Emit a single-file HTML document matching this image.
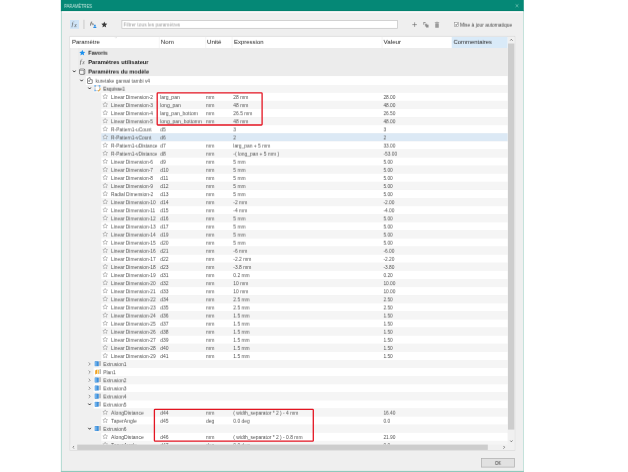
<!DOCTYPE html><html><head><meta charset="utf-8"><title>Paramètres</title><style>
html,body{margin:0;padding:0;background:#fff;}
body{width:628px;height:472px;overflow:hidden;position:relative;font-family:"Liberation Sans",sans-serif;}
svg.l{position:absolute;left:0;top:0;display:block;}
.c{position:absolute;left:0;top:0;width:628px;overflow:hidden;}
.t{position:absolute;left:0;top:0;display:block;height:10px;line-height:10px;white-space:nowrap;transform-origin:0 0;will-change:transform;font-family:"Liberation Sans",sans-serif;}
</style></head><body>
<svg class="l" width="628" height="472" viewBox="0 0 628 472">
<rect x="60.90" y="0.00" width="462.80" height="472.00" fill="#efefef"/>
<rect x="60.90" y="0.00" width="1.00" height="472.00" fill="#b2dad1"/>
<rect x="523.00" y="0.00" width="0.90" height="472.00" fill="#bfe0d8"/>
<rect x="60.90" y="470.90" width="463.00" height="1.10" fill="#8fc9bc"/>
<rect x="60.90" y="0.00" width="462.80" height="11.00" fill="#058876"/>
<rect x="60.90" y="10.60" width="462.80" height="0.60" fill="#027a68"/>
<rect x="61.90" y="11.30" width="461.10" height="1.60" fill="#fbf8f9"/>
<svg x="514.90" y="3.60" width="4.2" height="4.2" viewBox="0 0 10 10"><path d="M1.5 1.5 L8.5 8.5 M8.5 1.5 L1.5 8.5" stroke="#8fd0c3" stroke-width="1.5" fill="none"/></svg>
<rect x="70.00" y="20.00" width="9.00" height="8.80" fill="#cfe4f7"/>
<rect x="83.50" y="19.80" width="0.90" height="9.20" fill="#c6c6c6"/>
<svg x="93.00" y="24.30" width="3.8" height="3.8" viewBox="0 0 10 10"><circle cx="5" cy="2.6" r="2.4" fill="#2f8fe6"/><path d="M0.5 10 Q0.5 5.2 5 5.2 Q9.5 5.2 9.5 10 Z" fill="#2f8fe6"/></svg>
<svg x="101.10" y="21.30" width="6.4" height="6.4" viewBox="0 0 20 20"><polygon points="10,1 12.6,7.2 19.5,7.8 14.3,12.3 15.9,19 10,15.4 4.1,19 5.7,12.3 0.5,7.8 7.4,7.2" fill="#3a3a3a"/></svg>
<rect x="121.90" y="20.40" width="275.60" height="7.90" fill="#fff" stroke="#c2c2c2" stroke-width="0.7"/>
<svg x="411.90" y="21.90" width="5.4" height="5.4" viewBox="0 0 10 10"><path d="M5 0.8 L5 9.2 M0.8 5 L9.2 5" stroke="#666" stroke-width="1.1" fill="none"/></svg>
<svg x="422.60" y="21.40" width="6.6" height="6.6" viewBox="0 0 20 20"><path d="M2 2 L9 2 L9 5 L5 5 L5 10 L2 10 Z" fill="#9a9a9a"/><rect x="7" y="7" width="7" height="8.5" fill="#a2a2a2"/><rect x="10.5" y="10" width="7.5" height="8.5" fill="#8e8e8e"/></svg>
<svg x="434.20" y="21.40" width="5.6" height="6.8" viewBox="0 0 16 20"><rect x="5" y="0.8" width="6" height="2" fill="#9a9a9a"/><rect x="1.5" y="2.6" width="13" height="2.2" fill="#9a9a9a"/><rect x="2.8" y="5.6" width="10.4" height="13.2" rx="1" fill="#9a9a9a"/></svg>
<rect x="454.60" y="22.50" width="3.80" height="3.90" fill="#fbfbfb" stroke="#8a8a8a" stroke-width="0.5"/>
<svg x="454.90" y="22.90" width="3.2" height="3.2" viewBox="0 0 10 10"><path d="M1.5 5.2 L4 8 L8.8 1.8" stroke="#333" stroke-width="2.2" fill="none"/></svg>
<rect x="69.90" y="36.30" width="445.00" height="414.00" fill="#f0f0f0" stroke="#d9d9d9" stroke-width="0.7"/>
<rect x="70.00" y="36.90" width="437.60" height="11.10" fill="#ffffff"/>
<rect x="451.70" y="36.90" width="55.90" height="11.10" fill="#d9eaf8"/>
<rect x="158.90" y="36.90" width="0.50" height="11.10" fill="#ececec"/>
<rect x="205.60" y="36.90" width="0.50" height="11.10" fill="#ececec"/>
<rect x="231.80" y="36.90" width="0.50" height="11.10" fill="#ececec"/>
<rect x="381.80" y="36.90" width="0.50" height="11.10" fill="#ececec"/>
<svg x="114.50" y="37.00" width="2.6" height="1.5" viewBox="0 0 10 6"><path d="M0.5 0.5 L5 5 L9.5 0.5" fill="none" stroke="#b5b5b5" stroke-width="1.4"/></svg>
<rect x="78.00" y="48.00" width="429.60" height="28.10" fill="#ececec"/>
<svg x="79.05" y="49.35" width="6.5" height="6.5" viewBox="0 0 20 20"><polygon points="10,1 12.6,7.2 19.5,7.8 14.3,12.3 15.9,19 10,15.4 4.1,19 5.7,12.3 0.5,7.8 7.4,7.2" fill="#1a90ee"/></svg>
<path d="M73.30 70.90 L74.30 72.05 L75.30 70.90" fill="none" stroke="#2c2c2c" stroke-width="0.95" stroke-linecap="round" stroke-linejoin="round"/>
<svg x="78.85" y="68.20" width="6.8" height="6.8" viewBox="0 0 22 22"><rect x="2" y="2.5" width="17.5" height="17.5" rx="4" fill="#f6f6f6" stroke="#404040" stroke-width="2.0"/><path d="M2 7.5 L16 7.5 L19 3.5 M16 7.5 L16 20" fill="none" stroke="#4a4a4a" stroke-width="1.4"/></svg>
<rect x="85.80" y="76.10" width="421.80" height="9.00" fill="#ffffff"/>
<path d="M80.60 80.00 L81.60 81.15 L82.60 80.00" fill="none" stroke="#2c2c2c" stroke-width="0.95" stroke-linecap="round" stroke-linejoin="round"/>
<svg x="86.20" y="76.80" width="7.2" height="7.2" viewBox="0 0 22 22"><path d="M4 6 L4 19 Q4 20.5 5.5 20.5 L17 20.5 Q18.5 20.5 18.5 19 L18.5 9 L12 9 L12 3 Q12 1.8 10.5 2.4 Z" fill="#fff" stroke="#4a4a4a" stroke-width="1.9" stroke-linejoin="round"/><circle cx="9" cy="12.5" r="2.3" fill="#4a4a4a"/></svg>
<rect x="93.60" y="85.10" width="414.00" height="7.70" fill="#f5f5f5"/>
<path d="M88.60 87.85 L89.60 89.00 L90.60 87.85" fill="none" stroke="#2c2c2c" stroke-width="0.95" stroke-linecap="round" stroke-linejoin="round"/>
<svg x="94.10" y="84.95" width="6.8" height="6.8" viewBox="0 0 22 22"><rect x="3" y="3" width="15" height="15" fill="#fff" stroke="#666" stroke-width="1.6" stroke-dasharray="3 1.6"/><rect x="0.5" y="0.5" width="5" height="5" fill="#6ab4f5"/><rect x="15.5" y="0.5" width="5" height="5" fill="#6ab4f5"/><rect x="0.5" y="15.5" width="5" height="5" fill="#6ab4f5"/><path d="M12 20 L20 11 L22 13 L14 22 Z" fill="#f5a623"/></svg>
<rect x="101.30" y="92.80" width="406.30" height="8.09" fill="#ffffff"/>
<svg x="102.55" y="93.80" width="5.3" height="5.3" viewBox="0 0 20 20"><polygon points="10,1 12.6,7.2 19.5,7.8 14.3,12.3 15.9,19 10,15.4 4.1,19 5.7,12.3 0.5,7.8 7.4,7.2" fill="#fff" fill-opacity="0.5" stroke="#858585" stroke-width="1.7" stroke-linejoin="round"/></svg>
<rect x="101.30" y="100.89" width="406.30" height="8.09" fill="#f5f5f5"/>
<svg x="102.55" y="101.89" width="5.3" height="5.3" viewBox="0 0 20 20"><polygon points="10,1 12.6,7.2 19.5,7.8 14.3,12.3 15.9,19 10,15.4 4.1,19 5.7,12.3 0.5,7.8 7.4,7.2" fill="#fff" fill-opacity="0.5" stroke="#858585" stroke-width="1.7" stroke-linejoin="round"/></svg>
<rect x="101.30" y="108.99" width="406.30" height="8.09" fill="#ffffff"/>
<svg x="102.55" y="109.99" width="5.3" height="5.3" viewBox="0 0 20 20"><polygon points="10,1 12.6,7.2 19.5,7.8 14.3,12.3 15.9,19 10,15.4 4.1,19 5.7,12.3 0.5,7.8 7.4,7.2" fill="#fff" fill-opacity="0.5" stroke="#858585" stroke-width="1.7" stroke-linejoin="round"/></svg>
<rect x="101.30" y="117.08" width="406.30" height="8.09" fill="#f5f5f5"/>
<svg x="102.55" y="118.08" width="5.3" height="5.3" viewBox="0 0 20 20"><polygon points="10,1 12.6,7.2 19.5,7.8 14.3,12.3 15.9,19 10,15.4 4.1,19 5.7,12.3 0.5,7.8 7.4,7.2" fill="#fff" fill-opacity="0.5" stroke="#858585" stroke-width="1.7" stroke-linejoin="round"/></svg>
<rect x="101.30" y="125.18" width="406.30" height="8.10" fill="#ffffff"/>
<svg x="102.55" y="126.18" width="5.3" height="5.3" viewBox="0 0 20 20"><polygon points="10,1 12.6,7.2 19.5,7.8 14.3,12.3 15.9,19 10,15.4 4.1,19 5.7,12.3 0.5,7.8 7.4,7.2" fill="#fff" fill-opacity="0.5" stroke="#858585" stroke-width="1.7" stroke-linejoin="round"/></svg>
<rect x="101.30" y="133.28" width="406.30" height="8.09" fill="#dce9f5"/>
<svg x="102.55" y="134.27" width="5.3" height="5.3" viewBox="0 0 20 20"><polygon points="10,1 12.6,7.2 19.5,7.8 14.3,12.3 15.9,19 10,15.4 4.1,19 5.7,12.3 0.5,7.8 7.4,7.2" fill="#fff" fill-opacity="0.5" stroke="#858585" stroke-width="1.7" stroke-linejoin="round"/></svg>
<rect x="101.30" y="141.37" width="406.30" height="8.09" fill="#ffffff"/>
<svg x="102.55" y="142.37" width="5.3" height="5.3" viewBox="0 0 20 20"><polygon points="10,1 12.6,7.2 19.5,7.8 14.3,12.3 15.9,19 10,15.4 4.1,19 5.7,12.3 0.5,7.8 7.4,7.2" fill="#fff" fill-opacity="0.5" stroke="#858585" stroke-width="1.7" stroke-linejoin="round"/></svg>
<rect x="101.30" y="149.47" width="406.30" height="8.09" fill="#f5f5f5"/>
<svg x="102.55" y="150.46" width="5.3" height="5.3" viewBox="0 0 20 20"><polygon points="10,1 12.6,7.2 19.5,7.8 14.3,12.3 15.9,19 10,15.4 4.1,19 5.7,12.3 0.5,7.8 7.4,7.2" fill="#fff" fill-opacity="0.5" stroke="#858585" stroke-width="1.7" stroke-linejoin="round"/></svg>
<rect x="101.30" y="157.56" width="406.30" height="8.09" fill="#ffffff"/>
<svg x="102.55" y="158.56" width="5.3" height="5.3" viewBox="0 0 20 20"><polygon points="10,1 12.6,7.2 19.5,7.8 14.3,12.3 15.9,19 10,15.4 4.1,19 5.7,12.3 0.5,7.8 7.4,7.2" fill="#fff" fill-opacity="0.5" stroke="#858585" stroke-width="1.7" stroke-linejoin="round"/></svg>
<rect x="101.30" y="165.66" width="406.30" height="8.09" fill="#f5f5f5"/>
<svg x="102.55" y="166.65" width="5.3" height="5.3" viewBox="0 0 20 20"><polygon points="10,1 12.6,7.2 19.5,7.8 14.3,12.3 15.9,19 10,15.4 4.1,19 5.7,12.3 0.5,7.8 7.4,7.2" fill="#fff" fill-opacity="0.5" stroke="#858585" stroke-width="1.7" stroke-linejoin="round"/></svg>
<rect x="101.30" y="173.75" width="406.30" height="8.09" fill="#ffffff"/>
<svg x="102.55" y="174.75" width="5.3" height="5.3" viewBox="0 0 20 20"><polygon points="10,1 12.6,7.2 19.5,7.8 14.3,12.3 15.9,19 10,15.4 4.1,19 5.7,12.3 0.5,7.8 7.4,7.2" fill="#fff" fill-opacity="0.5" stroke="#858585" stroke-width="1.7" stroke-linejoin="round"/></svg>
<rect x="101.30" y="181.84" width="406.30" height="8.09" fill="#f5f5f5"/>
<svg x="102.55" y="182.84" width="5.3" height="5.3" viewBox="0 0 20 20"><polygon points="10,1 12.6,7.2 19.5,7.8 14.3,12.3 15.9,19 10,15.4 4.1,19 5.7,12.3 0.5,7.8 7.4,7.2" fill="#fff" fill-opacity="0.5" stroke="#858585" stroke-width="1.7" stroke-linejoin="round"/></svg>
<rect x="101.30" y="189.94" width="406.30" height="8.09" fill="#ffffff"/>
<svg x="102.55" y="190.94" width="5.3" height="5.3" viewBox="0 0 20 20"><polygon points="10,1 12.6,7.2 19.5,7.8 14.3,12.3 15.9,19 10,15.4 4.1,19 5.7,12.3 0.5,7.8 7.4,7.2" fill="#fff" fill-opacity="0.5" stroke="#858585" stroke-width="1.7" stroke-linejoin="round"/></svg>
<rect x="101.30" y="198.03" width="406.30" height="8.09" fill="#f5f5f5"/>
<svg x="102.55" y="199.03" width="5.3" height="5.3" viewBox="0 0 20 20"><polygon points="10,1 12.6,7.2 19.5,7.8 14.3,12.3 15.9,19 10,15.4 4.1,19 5.7,12.3 0.5,7.8 7.4,7.2" fill="#fff" fill-opacity="0.5" stroke="#858585" stroke-width="1.7" stroke-linejoin="round"/></svg>
<rect x="101.30" y="206.13" width="406.30" height="8.09" fill="#ffffff"/>
<svg x="102.55" y="207.13" width="5.3" height="5.3" viewBox="0 0 20 20"><polygon points="10,1 12.6,7.2 19.5,7.8 14.3,12.3 15.9,19 10,15.4 4.1,19 5.7,12.3 0.5,7.8 7.4,7.2" fill="#fff" fill-opacity="0.5" stroke="#858585" stroke-width="1.7" stroke-linejoin="round"/></svg>
<rect x="101.30" y="214.22" width="406.30" height="8.09" fill="#f5f5f5"/>
<svg x="102.55" y="215.22" width="5.3" height="5.3" viewBox="0 0 20 20"><polygon points="10,1 12.6,7.2 19.5,7.8 14.3,12.3 15.9,19 10,15.4 4.1,19 5.7,12.3 0.5,7.8 7.4,7.2" fill="#fff" fill-opacity="0.5" stroke="#858585" stroke-width="1.7" stroke-linejoin="round"/></svg>
<rect x="101.30" y="222.32" width="406.30" height="8.09" fill="#ffffff"/>
<svg x="102.55" y="223.32" width="5.3" height="5.3" viewBox="0 0 20 20"><polygon points="10,1 12.6,7.2 19.5,7.8 14.3,12.3 15.9,19 10,15.4 4.1,19 5.7,12.3 0.5,7.8 7.4,7.2" fill="#fff" fill-opacity="0.5" stroke="#858585" stroke-width="1.7" stroke-linejoin="round"/></svg>
<rect x="101.30" y="230.41" width="406.30" height="8.09" fill="#f5f5f5"/>
<svg x="102.55" y="231.41" width="5.3" height="5.3" viewBox="0 0 20 20"><polygon points="10,1 12.6,7.2 19.5,7.8 14.3,12.3 15.9,19 10,15.4 4.1,19 5.7,12.3 0.5,7.8 7.4,7.2" fill="#fff" fill-opacity="0.5" stroke="#858585" stroke-width="1.7" stroke-linejoin="round"/></svg>
<rect x="101.30" y="238.51" width="406.30" height="8.09" fill="#ffffff"/>
<svg x="102.55" y="239.51" width="5.3" height="5.3" viewBox="0 0 20 20"><polygon points="10,1 12.6,7.2 19.5,7.8 14.3,12.3 15.9,19 10,15.4 4.1,19 5.7,12.3 0.5,7.8 7.4,7.2" fill="#fff" fill-opacity="0.5" stroke="#858585" stroke-width="1.7" stroke-linejoin="round"/></svg>
<rect x="101.30" y="246.60" width="406.30" height="8.09" fill="#f5f5f5"/>
<svg x="102.55" y="247.60" width="5.3" height="5.3" viewBox="0 0 20 20"><polygon points="10,1 12.6,7.2 19.5,7.8 14.3,12.3 15.9,19 10,15.4 4.1,19 5.7,12.3 0.5,7.8 7.4,7.2" fill="#fff" fill-opacity="0.5" stroke="#858585" stroke-width="1.7" stroke-linejoin="round"/></svg>
<rect x="101.30" y="254.70" width="406.30" height="8.10" fill="#ffffff"/>
<svg x="102.55" y="255.70" width="5.3" height="5.3" viewBox="0 0 20 20"><polygon points="10,1 12.6,7.2 19.5,7.8 14.3,12.3 15.9,19 10,15.4 4.1,19 5.7,12.3 0.5,7.8 7.4,7.2" fill="#fff" fill-opacity="0.5" stroke="#858585" stroke-width="1.7" stroke-linejoin="round"/></svg>
<rect x="101.30" y="262.80" width="406.30" height="8.10" fill="#f5f5f5"/>
<svg x="102.55" y="263.79" width="5.3" height="5.3" viewBox="0 0 20 20"><polygon points="10,1 12.6,7.2 19.5,7.8 14.3,12.3 15.9,19 10,15.4 4.1,19 5.7,12.3 0.5,7.8 7.4,7.2" fill="#fff" fill-opacity="0.5" stroke="#858585" stroke-width="1.7" stroke-linejoin="round"/></svg>
<rect x="101.30" y="270.89" width="406.30" height="8.10" fill="#ffffff"/>
<svg x="102.55" y="271.89" width="5.3" height="5.3" viewBox="0 0 20 20"><polygon points="10,1 12.6,7.2 19.5,7.8 14.3,12.3 15.9,19 10,15.4 4.1,19 5.7,12.3 0.5,7.8 7.4,7.2" fill="#fff" fill-opacity="0.5" stroke="#858585" stroke-width="1.7" stroke-linejoin="round"/></svg>
<rect x="101.30" y="278.99" width="406.30" height="8.10" fill="#f5f5f5"/>
<svg x="102.55" y="279.98" width="5.3" height="5.3" viewBox="0 0 20 20"><polygon points="10,1 12.6,7.2 19.5,7.8 14.3,12.3 15.9,19 10,15.4 4.1,19 5.7,12.3 0.5,7.8 7.4,7.2" fill="#fff" fill-opacity="0.5" stroke="#858585" stroke-width="1.7" stroke-linejoin="round"/></svg>
<rect x="101.30" y="287.08" width="406.30" height="8.10" fill="#ffffff"/>
<svg x="102.55" y="288.08" width="5.3" height="5.3" viewBox="0 0 20 20"><polygon points="10,1 12.6,7.2 19.5,7.8 14.3,12.3 15.9,19 10,15.4 4.1,19 5.7,12.3 0.5,7.8 7.4,7.2" fill="#fff" fill-opacity="0.5" stroke="#858585" stroke-width="1.7" stroke-linejoin="round"/></svg>
<rect x="101.30" y="295.18" width="406.30" height="8.10" fill="#f5f5f5"/>
<svg x="102.55" y="296.17" width="5.3" height="5.3" viewBox="0 0 20 20"><polygon points="10,1 12.6,7.2 19.5,7.8 14.3,12.3 15.9,19 10,15.4 4.1,19 5.7,12.3 0.5,7.8 7.4,7.2" fill="#fff" fill-opacity="0.5" stroke="#858585" stroke-width="1.7" stroke-linejoin="round"/></svg>
<rect x="101.30" y="303.27" width="406.30" height="8.10" fill="#ffffff"/>
<svg x="102.55" y="304.27" width="5.3" height="5.3" viewBox="0 0 20 20"><polygon points="10,1 12.6,7.2 19.5,7.8 14.3,12.3 15.9,19 10,15.4 4.1,19 5.7,12.3 0.5,7.8 7.4,7.2" fill="#fff" fill-opacity="0.5" stroke="#858585" stroke-width="1.7" stroke-linejoin="round"/></svg>
<rect x="101.30" y="311.37" width="406.30" height="8.10" fill="#f5f5f5"/>
<svg x="102.55" y="312.36" width="5.3" height="5.3" viewBox="0 0 20 20"><polygon points="10,1 12.6,7.2 19.5,7.8 14.3,12.3 15.9,19 10,15.4 4.1,19 5.7,12.3 0.5,7.8 7.4,7.2" fill="#fff" fill-opacity="0.5" stroke="#858585" stroke-width="1.7" stroke-linejoin="round"/></svg>
<rect x="101.30" y="319.46" width="406.30" height="8.10" fill="#ffffff"/>
<svg x="102.55" y="320.46" width="5.3" height="5.3" viewBox="0 0 20 20"><polygon points="10,1 12.6,7.2 19.5,7.8 14.3,12.3 15.9,19 10,15.4 4.1,19 5.7,12.3 0.5,7.8 7.4,7.2" fill="#fff" fill-opacity="0.5" stroke="#858585" stroke-width="1.7" stroke-linejoin="round"/></svg>
<rect x="101.30" y="327.56" width="406.30" height="8.10" fill="#f5f5f5"/>
<svg x="102.55" y="328.55" width="5.3" height="5.3" viewBox="0 0 20 20"><polygon points="10,1 12.6,7.2 19.5,7.8 14.3,12.3 15.9,19 10,15.4 4.1,19 5.7,12.3 0.5,7.8 7.4,7.2" fill="#fff" fill-opacity="0.5" stroke="#858585" stroke-width="1.7" stroke-linejoin="round"/></svg>
<rect x="101.30" y="335.65" width="406.30" height="8.10" fill="#ffffff"/>
<svg x="102.55" y="336.65" width="5.3" height="5.3" viewBox="0 0 20 20"><polygon points="10,1 12.6,7.2 19.5,7.8 14.3,12.3 15.9,19 10,15.4 4.1,19 5.7,12.3 0.5,7.8 7.4,7.2" fill="#fff" fill-opacity="0.5" stroke="#858585" stroke-width="1.7" stroke-linejoin="round"/></svg>
<rect x="101.30" y="343.75" width="406.30" height="8.10" fill="#f5f5f5"/>
<svg x="102.55" y="344.74" width="5.3" height="5.3" viewBox="0 0 20 20"><polygon points="10,1 12.6,7.2 19.5,7.8 14.3,12.3 15.9,19 10,15.4 4.1,19 5.7,12.3 0.5,7.8 7.4,7.2" fill="#fff" fill-opacity="0.5" stroke="#858585" stroke-width="1.7" stroke-linejoin="round"/></svg>
<rect x="101.30" y="351.84" width="406.30" height="8.10" fill="#ffffff"/>
<svg x="102.55" y="352.84" width="5.3" height="5.3" viewBox="0 0 20 20"><polygon points="10,1 12.6,7.2 19.5,7.8 14.3,12.3 15.9,19 10,15.4 4.1,19 5.7,12.3 0.5,7.8 7.4,7.2" fill="#fff" fill-opacity="0.5" stroke="#858585" stroke-width="1.7" stroke-linejoin="round"/></svg>
<rect x="93.60" y="359.94" width="414.00" height="8.10" fill="#f5f5f5"/>
<path d="M89.00 362.73 L90.25 363.98 L89.00 365.23" fill="none" stroke="#555" stroke-width="0.6" stroke-linecap="round" stroke-linejoin="round"/>
<svg x="94.60" y="360.78" width="6.6" height="6.0" viewBox="0 0 22 20"><rect x="-1" y="1.5" width="15" height="17" rx="1.5" fill="#3f8fd8"/><rect x="1" y="3" width="6" height="14" fill="#6fb2ee"/><rect x="16.5" y="1" width="3.2" height="16" fill="#8a8a8a"/></svg>
<rect x="93.60" y="368.03" width="414.00" height="8.10" fill="#ffffff"/>
<path d="M89.00 370.83 L90.25 372.08 L89.00 373.33" fill="none" stroke="#555" stroke-width="0.6" stroke-linecap="round" stroke-linejoin="round"/>
<svg x="94.60" y="368.88" width="6.6" height="6.0" viewBox="0 0 22 20"><path d="M2 5 L9 1.5 L9 15 L2 18.5 Z" fill="#f0a020"/><path d="M10.5 4 L15 2 L15 16 L10.5 18 Z" fill="#f6c050"/><rect x="17" y="1" width="3" height="16" fill="#8a8a8a"/></svg>
<rect x="93.60" y="376.13" width="414.00" height="8.10" fill="#f5f5f5"/>
<path d="M89.00 378.92 L90.25 380.17 L89.00 381.42" fill="none" stroke="#555" stroke-width="0.6" stroke-linecap="round" stroke-linejoin="round"/>
<svg x="94.60" y="376.97" width="6.6" height="6.0" viewBox="0 0 22 20"><rect x="-1" y="1.5" width="15" height="17" rx="1.5" fill="#3f8fd8"/><rect x="1" y="3" width="6" height="14" fill="#6fb2ee"/><rect x="16.5" y="1" width="3.2" height="16" fill="#8a8a8a"/></svg>
<rect x="93.60" y="384.22" width="414.00" height="8.10" fill="#ffffff"/>
<path d="M89.00 387.02 L90.25 388.27 L89.00 389.52" fill="none" stroke="#555" stroke-width="0.6" stroke-linecap="round" stroke-linejoin="round"/>
<svg x="94.60" y="385.07" width="6.6" height="6.0" viewBox="0 0 22 20"><rect x="-1" y="1.5" width="15" height="17" rx="1.5" fill="#3f8fd8"/><rect x="1" y="3" width="6" height="14" fill="#6fb2ee"/><rect x="16.5" y="1" width="3.2" height="16" fill="#8a8a8a"/></svg>
<rect x="93.60" y="392.32" width="414.00" height="8.10" fill="#f5f5f5"/>
<path d="M89.00 395.11 L90.25 396.36 L89.00 397.61" fill="none" stroke="#555" stroke-width="0.6" stroke-linecap="round" stroke-linejoin="round"/>
<svg x="94.60" y="393.16" width="6.6" height="6.0" viewBox="0 0 22 20"><rect x="-1" y="1.5" width="15" height="17" rx="1.5" fill="#3f8fd8"/><rect x="1" y="3" width="6" height="14" fill="#6fb2ee"/><rect x="16.5" y="1" width="3.2" height="16" fill="#8a8a8a"/></svg>
<rect x="93.60" y="400.41" width="414.00" height="8.10" fill="#ffffff"/>
<path d="M88.60 403.86 L89.60 405.01 L90.60 403.86" fill="none" stroke="#2c2c2c" stroke-width="0.95" stroke-linecap="round" stroke-linejoin="round"/>
<svg x="94.60" y="401.26" width="6.6" height="6.0" viewBox="0 0 22 20"><rect x="-1" y="1.5" width="15" height="17" rx="1.5" fill="#3f8fd8"/><rect x="1" y="3" width="6" height="14" fill="#6fb2ee"/><rect x="16.5" y="1" width="3.2" height="16" fill="#8a8a8a"/></svg>
<rect x="101.30" y="408.51" width="406.30" height="8.10" fill="#f5f5f5"/>
<svg x="102.55" y="409.50" width="5.3" height="5.3" viewBox="0 0 20 20"><polygon points="10,1 12.6,7.2 19.5,7.8 14.3,12.3 15.9,19 10,15.4 4.1,19 5.7,12.3 0.5,7.8 7.4,7.2" fill="#fff" fill-opacity="0.5" stroke="#858585" stroke-width="1.7" stroke-linejoin="round"/></svg>
<rect x="101.30" y="416.60" width="406.30" height="8.10" fill="#ffffff"/>
<svg x="102.55" y="417.60" width="5.3" height="5.3" viewBox="0 0 20 20"><polygon points="10,1 12.6,7.2 19.5,7.8 14.3,12.3 15.9,19 10,15.4 4.1,19 5.7,12.3 0.5,7.8 7.4,7.2" fill="#fff" fill-opacity="0.5" stroke="#858585" stroke-width="1.7" stroke-linejoin="round"/></svg>
<rect x="93.60" y="424.70" width="414.00" height="8.10" fill="#f5f5f5"/>
<path d="M88.60 428.14 L89.60 429.29 L90.60 428.14" fill="none" stroke="#2c2c2c" stroke-width="0.95" stroke-linecap="round" stroke-linejoin="round"/>
<svg x="94.60" y="425.54" width="6.6" height="6.0" viewBox="0 0 22 20"><rect x="-1" y="1.5" width="15" height="17" rx="1.5" fill="#3f8fd8"/><rect x="1" y="3" width="6" height="14" fill="#6fb2ee"/><rect x="16.5" y="1" width="3.2" height="16" fill="#8a8a8a"/></svg>
<rect x="101.30" y="432.79" width="406.30" height="8.10" fill="#ffffff"/>
<svg x="102.55" y="433.79" width="5.3" height="5.3" viewBox="0 0 20 20"><polygon points="10,1 12.6,7.2 19.5,7.8 14.3,12.3 15.9,19 10,15.4 4.1,19 5.7,12.3 0.5,7.8 7.4,7.2" fill="#fff" fill-opacity="0.5" stroke="#858585" stroke-width="1.7" stroke-linejoin="round"/></svg>
<rect x="101.30" y="440.89" width="406.30" height="4.21" fill="#f5f5f5"/>
<svg x="102.55" y="441.88" width="5.3" height="5.3" viewBox="0 0 20 20"><polygon points="10,1 12.6,7.2 19.5,7.8 14.3,12.3 15.9,19 10,15.4 4.1,19 5.7,12.3 0.5,7.8 7.4,7.2" fill="#fff" fill-opacity="0.5" stroke="#858585" stroke-width="1.7" stroke-linejoin="round"/></svg>
</svg>
<div class="c" style="height:444.60px">
<span class="t" style="font-size:5.0px;color:#c4e6de;padding-left:0.245px;transform:translate(64px,0.89px) rotate(0.05deg) scaleX(0.8157);">PARAMÈTRES</span>
<span class="t" style="font-size:7.0px;color:#5c5c5c;font-style:italic;font-family:'Liberation Serif',serif;padding-left:0.600px;transform:translate(71px,19.26px) rotate(0.05deg) scaleX(1.0000);">f</span>
<span class="t" style="font-size:5.6px;color:#555;font-style:italic;font-family:'Liberation Serif',serif;padding-left:0.300px;transform:translate(74px,20.14px) rotate(0.05deg) scaleX(1.0000);">x</span>
<span class="t" style="font-size:5.0px;color:#333;font-weight:bold;font-style:italic;font-family:'Liberation Serif',serif;padding-left:0.300px;transform:translate(90px,18.59px) rotate(0.05deg) scaleX(1.0000);">f</span>
<span class="t" style="font-size:3.6px;color:#444;font-weight:bold;font-style:italic;font-family:'Liberation Serif',serif;transform:translate(92px,19.19px) rotate(0.05deg) scaleX(1.0000);">x</span>
<span class="t" style="font-size:4.9px;color:#9c9c9c;padding-left:0.501px;transform:translate(123px,20.44px) rotate(0.05deg) scaleX(0.9980);">Filtrer tous les paramètres</span>
<span class="t" style="font-size:4.9px;color:#484848;padding-left:0.898px;transform:translate(459px,20.69px) rotate(0.05deg) scaleX(1.0020);">Mise à jour automatique</span>
<span class="t" style="font-size:5.9px;color:#242424;padding-left:0.885px;transform:translate(71px,36.84px) rotate(0.05deg) scaleX(1.0165);">Paramètre</span>
<span class="t" style="font-size:5.9px;color:#242424;padding-left:0.767px;transform:translate(160px,36.84px) rotate(0.05deg) scaleX(1.0436);">Nom</span>
<span class="t" style="font-size:5.9px;color:#242424;padding-left:0.849px;transform:translate(206px,36.84px) rotate(0.05deg) scaleX(1.0600);">Unité</span>
<span class="t" style="font-size:5.9px;color:#242424;transform:translate(234px,36.84px) rotate(0.05deg) scaleX(1.0141);">Expression</span>
<span class="t" style="font-size:5.9px;color:#242424;padding-left:0.567px;transform:translate(383px,36.84px) rotate(0.05deg) scaleX(1.0591);">Valeur</span>
<span class="t" style="font-size:5.9px;color:#242424;padding-left:0.603px;transform:translate(453px,36.84px) rotate(0.05deg) scaleX(0.9958);">Commentaires</span>
<span class="t" style="font-size:5.55px;color:#222;font-weight:bold;padding-left:0.308px;transform:translate(88px,47.73px) rotate(0.05deg) scaleX(0.9725);">Favoris</span>
<span class="t" style="font-size:7.0px;color:#505050;font-style:italic;font-family:'Liberation Serif',serif;padding-left:0.800px;transform:translate(79px,56.76px) rotate(0.05deg) scaleX(1.0000);">f</span>
<span class="t" style="font-size:5.6px;color:#5a5a5a;font-style:italic;font-family:'Liberation Serif',serif;padding-left:0.200px;transform:translate(82px,57.24px) rotate(0.05deg) scaleX(1.0000);">x</span>
<span class="t" style="font-size:5.55px;color:#222;font-weight:bold;padding-left:0.290px;transform:translate(88px,57.03px) rotate(0.05deg) scaleX(1.0342);">Paramètres utilisateur</span>
<span class="t" style="font-size:5.55px;color:#222;font-weight:bold;padding-left:0.294px;transform:translate(88px,66.53px) rotate(0.05deg) scaleX(1.0213);">Paramètres du modèle</span>
<span class="t" style="font-size:4.64px;color:#525252;padding-left:0.471px;transform:translate(95px,76.74px) rotate(0.05deg) scaleX(1.0619);">kuretake gansai tambi v4</span>
<span class="t" style="font-size:4.84px;color:#333;padding-left:0.205px;transform:translate(103px,84.69px) rotate(0.05deg) scaleX(0.9750);">Esquisse1</span>
<span class="t" style="font-size:4.84px;color:#525252;padding-left:0.100px;transform:translate(111px,92.99px) rotate(0.05deg) scaleX(1.0000);">Linear Dimension-2</span>
<span class="t" style="font-size:4.84px;color:#525252;padding-left:0.192px;transform:translate(160px,92.99px) rotate(0.05deg) scaleX(1.0400);">larg_pan</span>
<span class="t" style="font-size:4.84px;color:#525252;transform:translate(206px,92.99px) rotate(0.05deg) scaleX(1.0400);">mm</span>
<span class="t" style="font-size:4.84px;color:#525252;padding-left:0.294px;transform:translate(233px,92.99px) rotate(0.05deg) scaleX(1.0200);">28 mm</span>
<span class="t" style="font-size:4.84px;color:#525252;padding-left:0.400px;transform:translate(383px,92.99px) rotate(0.05deg) scaleX(1.0000);">28.00</span>
<span class="t" style="font-size:4.84px;color:#525252;padding-left:0.100px;transform:translate(111px,101.08px) rotate(0.05deg) scaleX(1.0000);">Linear Dimension-3</span>
<span class="t" style="font-size:4.84px;color:#525252;padding-left:0.192px;transform:translate(160px,101.08px) rotate(0.05deg) scaleX(1.0400);">long_pan</span>
<span class="t" style="font-size:4.84px;color:#525252;transform:translate(206px,101.08px) rotate(0.05deg) scaleX(1.0400);">mm</span>
<span class="t" style="font-size:4.84px;color:#525252;padding-left:0.294px;transform:translate(233px,101.08px) rotate(0.05deg) scaleX(1.0200);">48 mm</span>
<span class="t" style="font-size:4.84px;color:#525252;padding-left:0.400px;transform:translate(383px,101.08px) rotate(0.05deg) scaleX(1.0000);">48.00</span>
<span class="t" style="font-size:4.84px;color:#525252;padding-left:0.100px;transform:translate(111px,109.18px) rotate(0.05deg) scaleX(1.0000);">Linear Dimension-4</span>
<span class="t" style="font-size:4.84px;color:#525252;padding-left:0.192px;transform:translate(160px,109.18px) rotate(0.05deg) scaleX(1.0400);">larg_pan_bottom</span>
<span class="t" style="font-size:4.84px;color:#525252;transform:translate(206px,109.18px) rotate(0.05deg) scaleX(1.0400);">mm</span>
<span class="t" style="font-size:4.84px;color:#525252;padding-left:0.294px;transform:translate(233px,109.18px) rotate(0.05deg) scaleX(1.0200);">26.5 mm</span>
<span class="t" style="font-size:4.84px;color:#525252;padding-left:0.400px;transform:translate(383px,109.18px) rotate(0.05deg) scaleX(1.0000);">26.50</span>
<span class="t" style="font-size:4.84px;color:#525252;padding-left:0.100px;transform:translate(111px,117.27px) rotate(0.05deg) scaleX(1.0000);">Linear Dimension-5</span>
<span class="t" style="font-size:4.84px;color:#525252;padding-left:0.192px;transform:translate(160px,117.27px) rotate(0.05deg) scaleX(1.0400);">long_pan_bottomn</span>
<span class="t" style="font-size:4.84px;color:#525252;transform:translate(206px,117.27px) rotate(0.05deg) scaleX(1.0400);">mm</span>
<span class="t" style="font-size:4.84px;color:#525252;padding-left:0.294px;transform:translate(233px,117.27px) rotate(0.05deg) scaleX(1.0200);">48 mm</span>
<span class="t" style="font-size:4.84px;color:#525252;padding-left:0.400px;transform:translate(383px,117.27px) rotate(0.05deg) scaleX(1.0000);">48.00</span>
<span class="t" style="font-size:4.84px;color:#525252;padding-left:0.100px;transform:translate(111px,125.37px) rotate(0.05deg) scaleX(1.0000);">R-Pattern1-uCount</span>
<span class="t" style="font-size:4.84px;color:#525252;padding-left:0.192px;transform:translate(160px,125.37px) rotate(0.05deg) scaleX(1.0400);">d5</span>
<span class="t" style="font-size:4.84px;color:#525252;padding-left:0.294px;transform:translate(233px,125.37px) rotate(0.05deg) scaleX(1.0200);">3</span>
<span class="t" style="font-size:4.84px;color:#525252;padding-left:0.400px;transform:translate(383px,125.37px) rotate(0.05deg) scaleX(1.0000);">3</span>
<span class="t" style="font-size:4.84px;color:#525252;padding-left:0.100px;transform:translate(111px,133.46px) rotate(0.05deg) scaleX(1.0000);">R-Pattern1-vCount</span>
<span class="t" style="font-size:4.84px;color:#525252;padding-left:0.192px;transform:translate(160px,133.46px) rotate(0.05deg) scaleX(1.0400);">d6</span>
<span class="t" style="font-size:4.84px;color:#525252;padding-left:0.294px;transform:translate(233px,133.46px) rotate(0.05deg) scaleX(1.0200);">2</span>
<span class="t" style="font-size:4.84px;color:#525252;padding-left:0.400px;transform:translate(383px,133.46px) rotate(0.05deg) scaleX(1.0000);">2</span>
<span class="t" style="font-size:4.84px;color:#525252;padding-left:0.100px;transform:translate(111px,141.56px) rotate(0.05deg) scaleX(1.0000);">R-Pattern1-uDistance</span>
<span class="t" style="font-size:4.84px;color:#525252;padding-left:0.192px;transform:translate(160px,141.56px) rotate(0.05deg) scaleX(1.0400);">d7</span>
<span class="t" style="font-size:4.84px;color:#525252;transform:translate(206px,141.56px) rotate(0.05deg) scaleX(1.0400);">mm</span>
<span class="t" style="font-size:4.84px;color:#525252;padding-left:0.294px;transform:translate(233px,141.56px) rotate(0.05deg) scaleX(1.0200);">larg_pan + 5 mm</span>
<span class="t" style="font-size:4.84px;color:#525252;padding-left:0.400px;transform:translate(383px,141.56px) rotate(0.05deg) scaleX(1.0000);">33.00</span>
<span class="t" style="font-size:4.84px;color:#525252;padding-left:0.100px;transform:translate(111px,149.65px) rotate(0.05deg) scaleX(1.0000);">R-Pattern1-vDistance</span>
<span class="t" style="font-size:4.84px;color:#525252;padding-left:0.192px;transform:translate(160px,149.65px) rotate(0.05deg) scaleX(1.0400);">d8</span>
<span class="t" style="font-size:4.84px;color:#525252;transform:translate(206px,149.65px) rotate(0.05deg) scaleX(1.0400);">mm</span>
<span class="t" style="font-size:4.84px;color:#525252;padding-left:0.294px;transform:translate(233px,149.65px) rotate(0.05deg) scaleX(1.0200);">-( long_pan + 5 mm )</span>
<span class="t" style="font-size:4.84px;color:#525252;padding-left:0.400px;transform:translate(383px,149.65px) rotate(0.05deg) scaleX(1.0000);">-53.00</span>
<span class="t" style="font-size:4.84px;color:#525252;padding-left:0.100px;transform:translate(111px,157.75px) rotate(0.05deg) scaleX(1.0000);">Linear Dimension-6</span>
<span class="t" style="font-size:4.84px;color:#525252;padding-left:0.192px;transform:translate(160px,157.75px) rotate(0.05deg) scaleX(1.0400);">d9</span>
<span class="t" style="font-size:4.84px;color:#525252;transform:translate(206px,157.75px) rotate(0.05deg) scaleX(1.0400);">mm</span>
<span class="t" style="font-size:4.84px;color:#525252;padding-left:0.294px;transform:translate(233px,157.75px) rotate(0.05deg) scaleX(1.0200);">5 mm</span>
<span class="t" style="font-size:4.84px;color:#525252;padding-left:0.400px;transform:translate(383px,157.75px) rotate(0.05deg) scaleX(1.0000);">5.00</span>
<span class="t" style="font-size:4.84px;color:#525252;padding-left:0.100px;transform:translate(111px,165.84px) rotate(0.05deg) scaleX(1.0000);">Linear Dimension-7</span>
<span class="t" style="font-size:4.84px;color:#525252;padding-left:0.192px;transform:translate(160px,165.84px) rotate(0.05deg) scaleX(1.0400);">d10</span>
<span class="t" style="font-size:4.84px;color:#525252;transform:translate(206px,165.84px) rotate(0.05deg) scaleX(1.0400);">mm</span>
<span class="t" style="font-size:4.84px;color:#525252;padding-left:0.294px;transform:translate(233px,165.84px) rotate(0.05deg) scaleX(1.0200);">5 mm</span>
<span class="t" style="font-size:4.84px;color:#525252;padding-left:0.400px;transform:translate(383px,165.84px) rotate(0.05deg) scaleX(1.0000);">5.00</span>
<span class="t" style="font-size:4.84px;color:#525252;padding-left:0.100px;transform:translate(111px,173.94px) rotate(0.05deg) scaleX(1.0000);">Linear Dimension-8</span>
<span class="t" style="font-size:4.84px;color:#525252;padding-left:0.192px;transform:translate(160px,173.94px) rotate(0.05deg) scaleX(1.0400);">d11</span>
<span class="t" style="font-size:4.84px;color:#525252;transform:translate(206px,173.94px) rotate(0.05deg) scaleX(1.0400);">mm</span>
<span class="t" style="font-size:4.84px;color:#525252;padding-left:0.294px;transform:translate(233px,173.94px) rotate(0.05deg) scaleX(1.0200);">5 mm</span>
<span class="t" style="font-size:4.84px;color:#525252;padding-left:0.400px;transform:translate(383px,173.94px) rotate(0.05deg) scaleX(1.0000);">5.00</span>
<span class="t" style="font-size:4.84px;color:#525252;padding-left:0.100px;transform:translate(111px,182.03px) rotate(0.05deg) scaleX(1.0000);">Linear Dimension-9</span>
<span class="t" style="font-size:4.84px;color:#525252;padding-left:0.192px;transform:translate(160px,182.03px) rotate(0.05deg) scaleX(1.0400);">d12</span>
<span class="t" style="font-size:4.84px;color:#525252;transform:translate(206px,182.03px) rotate(0.05deg) scaleX(1.0400);">mm</span>
<span class="t" style="font-size:4.84px;color:#525252;padding-left:0.294px;transform:translate(233px,182.03px) rotate(0.05deg) scaleX(1.0200);">5 mm</span>
<span class="t" style="font-size:4.84px;color:#525252;padding-left:0.400px;transform:translate(383px,182.03px) rotate(0.05deg) scaleX(1.0000);">5.00</span>
<span class="t" style="font-size:4.84px;color:#525252;padding-left:0.100px;transform:translate(111px,190.13px) rotate(0.05deg) scaleX(1.0000);">Radial Dimension-2</span>
<span class="t" style="font-size:4.84px;color:#525252;padding-left:0.192px;transform:translate(160px,190.13px) rotate(0.05deg) scaleX(1.0400);">d13</span>
<span class="t" style="font-size:4.84px;color:#525252;transform:translate(206px,190.13px) rotate(0.05deg) scaleX(1.0400);">mm</span>
<span class="t" style="font-size:4.84px;color:#525252;padding-left:0.294px;transform:translate(233px,190.13px) rotate(0.05deg) scaleX(1.0200);">5 mm</span>
<span class="t" style="font-size:4.84px;color:#525252;padding-left:0.400px;transform:translate(383px,190.13px) rotate(0.05deg) scaleX(1.0000);">5.00</span>
<span class="t" style="font-size:4.84px;color:#525252;padding-left:0.100px;transform:translate(111px,198.22px) rotate(0.05deg) scaleX(1.0000);">Linear Dimension-10</span>
<span class="t" style="font-size:4.84px;color:#525252;padding-left:0.192px;transform:translate(160px,198.22px) rotate(0.05deg) scaleX(1.0400);">d14</span>
<span class="t" style="font-size:4.84px;color:#525252;transform:translate(206px,198.22px) rotate(0.05deg) scaleX(1.0400);">mm</span>
<span class="t" style="font-size:4.84px;color:#525252;padding-left:0.294px;transform:translate(233px,198.22px) rotate(0.05deg) scaleX(1.0200);">-2 mm</span>
<span class="t" style="font-size:4.84px;color:#525252;padding-left:0.400px;transform:translate(383px,198.22px) rotate(0.05deg) scaleX(1.0000);">-2.00</span>
<span class="t" style="font-size:4.84px;color:#525252;padding-left:0.100px;transform:translate(111px,206.32px) rotate(0.05deg) scaleX(1.0000);">Linear Dimension-11</span>
<span class="t" style="font-size:4.84px;color:#525252;padding-left:0.192px;transform:translate(160px,206.32px) rotate(0.05deg) scaleX(1.0400);">d15</span>
<span class="t" style="font-size:4.84px;color:#525252;transform:translate(206px,206.32px) rotate(0.05deg) scaleX(1.0400);">mm</span>
<span class="t" style="font-size:4.84px;color:#525252;padding-left:0.294px;transform:translate(233px,206.32px) rotate(0.05deg) scaleX(1.0200);">-4 mm</span>
<span class="t" style="font-size:4.84px;color:#525252;padding-left:0.400px;transform:translate(383px,206.32px) rotate(0.05deg) scaleX(1.0000);">-4.00</span>
<span class="t" style="font-size:4.84px;color:#525252;padding-left:0.100px;transform:translate(111px,214.41px) rotate(0.05deg) scaleX(1.0000);">Linear Dimension-12</span>
<span class="t" style="font-size:4.84px;color:#525252;padding-left:0.192px;transform:translate(160px,214.41px) rotate(0.05deg) scaleX(1.0400);">d16</span>
<span class="t" style="font-size:4.84px;color:#525252;transform:translate(206px,214.41px) rotate(0.05deg) scaleX(1.0400);">mm</span>
<span class="t" style="font-size:4.84px;color:#525252;padding-left:0.294px;transform:translate(233px,214.41px) rotate(0.05deg) scaleX(1.0200);">5 mm</span>
<span class="t" style="font-size:4.84px;color:#525252;padding-left:0.400px;transform:translate(383px,214.41px) rotate(0.05deg) scaleX(1.0000);">5.00</span>
<span class="t" style="font-size:4.84px;color:#525252;padding-left:0.100px;transform:translate(111px,222.51px) rotate(0.05deg) scaleX(1.0000);">Linear Dimension-13</span>
<span class="t" style="font-size:4.84px;color:#525252;padding-left:0.192px;transform:translate(160px,222.51px) rotate(0.05deg) scaleX(1.0400);">d17</span>
<span class="t" style="font-size:4.84px;color:#525252;transform:translate(206px,222.51px) rotate(0.05deg) scaleX(1.0400);">mm</span>
<span class="t" style="font-size:4.84px;color:#525252;padding-left:0.294px;transform:translate(233px,222.51px) rotate(0.05deg) scaleX(1.0200);">5 mm</span>
<span class="t" style="font-size:4.84px;color:#525252;padding-left:0.400px;transform:translate(383px,222.51px) rotate(0.05deg) scaleX(1.0000);">5.00</span>
<span class="t" style="font-size:4.84px;color:#525252;padding-left:0.100px;transform:translate(111px,230.60px) rotate(0.05deg) scaleX(1.0000);">Linear Dimension-14</span>
<span class="t" style="font-size:4.84px;color:#525252;padding-left:0.192px;transform:translate(160px,230.60px) rotate(0.05deg) scaleX(1.0400);">d19</span>
<span class="t" style="font-size:4.84px;color:#525252;transform:translate(206px,230.60px) rotate(0.05deg) scaleX(1.0400);">mm</span>
<span class="t" style="font-size:4.84px;color:#525252;padding-left:0.294px;transform:translate(233px,230.60px) rotate(0.05deg) scaleX(1.0200);">5 mm</span>
<span class="t" style="font-size:4.84px;color:#525252;padding-left:0.400px;transform:translate(383px,230.60px) rotate(0.05deg) scaleX(1.0000);">5.00</span>
<span class="t" style="font-size:4.84px;color:#525252;padding-left:0.100px;transform:translate(111px,238.70px) rotate(0.05deg) scaleX(1.0000);">Linear Dimension-15</span>
<span class="t" style="font-size:4.84px;color:#525252;padding-left:0.192px;transform:translate(160px,238.70px) rotate(0.05deg) scaleX(1.0400);">d20</span>
<span class="t" style="font-size:4.84px;color:#525252;transform:translate(206px,238.70px) rotate(0.05deg) scaleX(1.0400);">mm</span>
<span class="t" style="font-size:4.84px;color:#525252;padding-left:0.294px;transform:translate(233px,238.70px) rotate(0.05deg) scaleX(1.0200);">5 mm</span>
<span class="t" style="font-size:4.84px;color:#525252;padding-left:0.400px;transform:translate(383px,238.70px) rotate(0.05deg) scaleX(1.0000);">5.00</span>
<span class="t" style="font-size:4.84px;color:#525252;padding-left:0.100px;transform:translate(111px,246.79px) rotate(0.05deg) scaleX(1.0000);">Linear Dimension-16</span>
<span class="t" style="font-size:4.84px;color:#525252;padding-left:0.192px;transform:translate(160px,246.79px) rotate(0.05deg) scaleX(1.0400);">d21</span>
<span class="t" style="font-size:4.84px;color:#525252;transform:translate(206px,246.79px) rotate(0.05deg) scaleX(1.0400);">mm</span>
<span class="t" style="font-size:4.84px;color:#525252;padding-left:0.294px;transform:translate(233px,246.79px) rotate(0.05deg) scaleX(1.0200);">-6 mm</span>
<span class="t" style="font-size:4.84px;color:#525252;padding-left:0.400px;transform:translate(383px,246.79px) rotate(0.05deg) scaleX(1.0000);">-6.00</span>
<span class="t" style="font-size:4.84px;color:#525252;padding-left:0.100px;transform:translate(111px,254.89px) rotate(0.05deg) scaleX(1.0000);">Linear Dimension-17</span>
<span class="t" style="font-size:4.84px;color:#525252;padding-left:0.192px;transform:translate(160px,254.89px) rotate(0.05deg) scaleX(1.0400);">d22</span>
<span class="t" style="font-size:4.84px;color:#525252;transform:translate(206px,254.89px) rotate(0.05deg) scaleX(1.0400);">mm</span>
<span class="t" style="font-size:4.84px;color:#525252;padding-left:0.294px;transform:translate(233px,254.89px) rotate(0.05deg) scaleX(1.0200);">-2.2 mm</span>
<span class="t" style="font-size:4.84px;color:#525252;padding-left:0.400px;transform:translate(383px,254.89px) rotate(0.05deg) scaleX(1.0000);">-2.20</span>
<span class="t" style="font-size:4.84px;color:#525252;padding-left:0.100px;transform:translate(111px,262.98px) rotate(0.05deg) scaleX(1.0000);">Linear Dimension-18</span>
<span class="t" style="font-size:4.84px;color:#525252;padding-left:0.192px;transform:translate(160px,262.98px) rotate(0.05deg) scaleX(1.0400);">d23</span>
<span class="t" style="font-size:4.84px;color:#525252;transform:translate(206px,262.98px) rotate(0.05deg) scaleX(1.0400);">mm</span>
<span class="t" style="font-size:4.84px;color:#525252;padding-left:0.294px;transform:translate(233px,262.98px) rotate(0.05deg) scaleX(1.0200);">-3.8 mm</span>
<span class="t" style="font-size:4.84px;color:#525252;padding-left:0.400px;transform:translate(383px,262.98px) rotate(0.05deg) scaleX(1.0000);">-3.80</span>
<span class="t" style="font-size:4.84px;color:#525252;padding-left:0.100px;transform:translate(111px,271.08px) rotate(0.05deg) scaleX(1.0000);">Linear Dimension-19</span>
<span class="t" style="font-size:4.84px;color:#525252;padding-left:0.192px;transform:translate(160px,271.08px) rotate(0.05deg) scaleX(1.0400);">d31</span>
<span class="t" style="font-size:4.84px;color:#525252;transform:translate(206px,271.08px) rotate(0.05deg) scaleX(1.0400);">mm</span>
<span class="t" style="font-size:4.84px;color:#525252;padding-left:0.294px;transform:translate(233px,271.08px) rotate(0.05deg) scaleX(1.0200);">0.2 mm</span>
<span class="t" style="font-size:4.84px;color:#525252;padding-left:0.400px;transform:translate(383px,271.08px) rotate(0.05deg) scaleX(1.0000);">0.20</span>
<span class="t" style="font-size:4.84px;color:#525252;padding-left:0.100px;transform:translate(111px,279.17px) rotate(0.05deg) scaleX(1.0000);">Linear Dimension-20</span>
<span class="t" style="font-size:4.84px;color:#525252;padding-left:0.192px;transform:translate(160px,279.17px) rotate(0.05deg) scaleX(1.0400);">d32</span>
<span class="t" style="font-size:4.84px;color:#525252;transform:translate(206px,279.17px) rotate(0.05deg) scaleX(1.0400);">mm</span>
<span class="t" style="font-size:4.84px;color:#525252;padding-left:0.294px;transform:translate(233px,279.17px) rotate(0.05deg) scaleX(1.0200);">10 mm</span>
<span class="t" style="font-size:4.84px;color:#525252;padding-left:0.400px;transform:translate(383px,279.17px) rotate(0.05deg) scaleX(1.0000);">10.00</span>
<span class="t" style="font-size:4.84px;color:#525252;padding-left:0.100px;transform:translate(111px,287.27px) rotate(0.05deg) scaleX(1.0000);">Linear Dimension-21</span>
<span class="t" style="font-size:4.84px;color:#525252;padding-left:0.192px;transform:translate(160px,287.27px) rotate(0.05deg) scaleX(1.0400);">d33</span>
<span class="t" style="font-size:4.84px;color:#525252;transform:translate(206px,287.27px) rotate(0.05deg) scaleX(1.0400);">mm</span>
<span class="t" style="font-size:4.84px;color:#525252;padding-left:0.294px;transform:translate(233px,287.27px) rotate(0.05deg) scaleX(1.0200);">10 mm</span>
<span class="t" style="font-size:4.84px;color:#525252;padding-left:0.400px;transform:translate(383px,287.27px) rotate(0.05deg) scaleX(1.0000);">10.00</span>
<span class="t" style="font-size:4.84px;color:#525252;padding-left:0.100px;transform:translate(111px,295.36px) rotate(0.05deg) scaleX(1.0000);">Linear Dimension-22</span>
<span class="t" style="font-size:4.84px;color:#525252;padding-left:0.192px;transform:translate(160px,295.36px) rotate(0.05deg) scaleX(1.0400);">d34</span>
<span class="t" style="font-size:4.84px;color:#525252;transform:translate(206px,295.36px) rotate(0.05deg) scaleX(1.0400);">mm</span>
<span class="t" style="font-size:4.84px;color:#525252;padding-left:0.294px;transform:translate(233px,295.36px) rotate(0.05deg) scaleX(1.0200);">2.5 mm</span>
<span class="t" style="font-size:4.84px;color:#525252;padding-left:0.400px;transform:translate(383px,295.36px) rotate(0.05deg) scaleX(1.0000);">2.50</span>
<span class="t" style="font-size:4.84px;color:#525252;padding-left:0.100px;transform:translate(111px,303.46px) rotate(0.05deg) scaleX(1.0000);">Linear Dimension-23</span>
<span class="t" style="font-size:4.84px;color:#525252;padding-left:0.192px;transform:translate(160px,303.46px) rotate(0.05deg) scaleX(1.0400);">d35</span>
<span class="t" style="font-size:4.84px;color:#525252;transform:translate(206px,303.46px) rotate(0.05deg) scaleX(1.0400);">mm</span>
<span class="t" style="font-size:4.84px;color:#525252;padding-left:0.294px;transform:translate(233px,303.46px) rotate(0.05deg) scaleX(1.0200);">2.5 mm</span>
<span class="t" style="font-size:4.84px;color:#525252;padding-left:0.400px;transform:translate(383px,303.46px) rotate(0.05deg) scaleX(1.0000);">2.50</span>
<span class="t" style="font-size:4.84px;color:#525252;padding-left:0.100px;transform:translate(111px,311.55px) rotate(0.05deg) scaleX(1.0000);">Linear Dimension-24</span>
<span class="t" style="font-size:4.84px;color:#525252;padding-left:0.192px;transform:translate(160px,311.55px) rotate(0.05deg) scaleX(1.0400);">d36</span>
<span class="t" style="font-size:4.84px;color:#525252;transform:translate(206px,311.55px) rotate(0.05deg) scaleX(1.0400);">mm</span>
<span class="t" style="font-size:4.84px;color:#525252;padding-left:0.294px;transform:translate(233px,311.55px) rotate(0.05deg) scaleX(1.0200);">1.5 mm</span>
<span class="t" style="font-size:4.84px;color:#525252;padding-left:0.400px;transform:translate(383px,311.55px) rotate(0.05deg) scaleX(1.0000);">1.50</span>
<span class="t" style="font-size:4.84px;color:#525252;padding-left:0.100px;transform:translate(111px,319.65px) rotate(0.05deg) scaleX(1.0000);">Linear Dimension-25</span>
<span class="t" style="font-size:4.84px;color:#525252;padding-left:0.192px;transform:translate(160px,319.65px) rotate(0.05deg) scaleX(1.0400);">d37</span>
<span class="t" style="font-size:4.84px;color:#525252;transform:translate(206px,319.65px) rotate(0.05deg) scaleX(1.0400);">mm</span>
<span class="t" style="font-size:4.84px;color:#525252;padding-left:0.294px;transform:translate(233px,319.65px) rotate(0.05deg) scaleX(1.0200);">1.5 mm</span>
<span class="t" style="font-size:4.84px;color:#525252;padding-left:0.400px;transform:translate(383px,319.65px) rotate(0.05deg) scaleX(1.0000);">1.50</span>
<span class="t" style="font-size:4.84px;color:#525252;padding-left:0.100px;transform:translate(111px,327.74px) rotate(0.05deg) scaleX(1.0000);">Linear Dimension-26</span>
<span class="t" style="font-size:4.84px;color:#525252;padding-left:0.192px;transform:translate(160px,327.74px) rotate(0.05deg) scaleX(1.0400);">d38</span>
<span class="t" style="font-size:4.84px;color:#525252;transform:translate(206px,327.74px) rotate(0.05deg) scaleX(1.0400);">mm</span>
<span class="t" style="font-size:4.84px;color:#525252;padding-left:0.294px;transform:translate(233px,327.74px) rotate(0.05deg) scaleX(1.0200);">1.5 mm</span>
<span class="t" style="font-size:4.84px;color:#525252;padding-left:0.400px;transform:translate(383px,327.74px) rotate(0.05deg) scaleX(1.0000);">1.50</span>
<span class="t" style="font-size:4.84px;color:#525252;padding-left:0.100px;transform:translate(111px,335.84px) rotate(0.05deg) scaleX(1.0000);">Linear Dimension-27</span>
<span class="t" style="font-size:4.84px;color:#525252;padding-left:0.192px;transform:translate(160px,335.84px) rotate(0.05deg) scaleX(1.0400);">d39</span>
<span class="t" style="font-size:4.84px;color:#525252;transform:translate(206px,335.84px) rotate(0.05deg) scaleX(1.0400);">mm</span>
<span class="t" style="font-size:4.84px;color:#525252;padding-left:0.294px;transform:translate(233px,335.84px) rotate(0.05deg) scaleX(1.0200);">1.5 mm</span>
<span class="t" style="font-size:4.84px;color:#525252;padding-left:0.400px;transform:translate(383px,335.84px) rotate(0.05deg) scaleX(1.0000);">1.50</span>
<span class="t" style="font-size:4.84px;color:#525252;padding-left:0.100px;transform:translate(111px,343.93px) rotate(0.05deg) scaleX(1.0000);">Linear Dimension-28</span>
<span class="t" style="font-size:4.84px;color:#525252;padding-left:0.192px;transform:translate(160px,343.93px) rotate(0.05deg) scaleX(1.0400);">d40</span>
<span class="t" style="font-size:4.84px;color:#525252;transform:translate(206px,343.93px) rotate(0.05deg) scaleX(1.0400);">mm</span>
<span class="t" style="font-size:4.84px;color:#525252;padding-left:0.294px;transform:translate(233px,343.93px) rotate(0.05deg) scaleX(1.0200);">1.5 mm</span>
<span class="t" style="font-size:4.84px;color:#525252;padding-left:0.400px;transform:translate(383px,343.93px) rotate(0.05deg) scaleX(1.0000);">1.50</span>
<span class="t" style="font-size:4.84px;color:#525252;padding-left:0.100px;transform:translate(111px,352.03px) rotate(0.05deg) scaleX(1.0000);">Linear Dimension-29</span>
<span class="t" style="font-size:4.84px;color:#525252;padding-left:0.192px;transform:translate(160px,352.03px) rotate(0.05deg) scaleX(1.0400);">d41</span>
<span class="t" style="font-size:4.84px;color:#525252;transform:translate(206px,352.03px) rotate(0.05deg) scaleX(1.0400);">mm</span>
<span class="t" style="font-size:4.84px;color:#525252;padding-left:0.294px;transform:translate(233px,352.03px) rotate(0.05deg) scaleX(1.0200);">1.5 mm</span>
<span class="t" style="font-size:4.84px;color:#525252;padding-left:0.400px;transform:translate(383px,352.03px) rotate(0.05deg) scaleX(1.0000);">1.50</span>
<span class="t" style="font-size:4.84px;color:#525252;padding-left:0.196px;transform:translate(103px,360.12px) rotate(0.05deg) scaleX(1.0200);">Extrusion1</span>
<span class="t" style="font-size:4.84px;color:#525252;padding-left:0.196px;transform:translate(103px,368.22px) rotate(0.05deg) scaleX(1.0200);">Plan1</span>
<span class="t" style="font-size:4.84px;color:#525252;padding-left:0.196px;transform:translate(103px,376.31px) rotate(0.05deg) scaleX(1.0200);">Extrusion2</span>
<span class="t" style="font-size:4.84px;color:#525252;padding-left:0.196px;transform:translate(103px,384.41px) rotate(0.05deg) scaleX(1.0200);">Extrusion3</span>
<span class="t" style="font-size:4.84px;color:#525252;padding-left:0.196px;transform:translate(103px,392.50px) rotate(0.05deg) scaleX(1.0200);">Extrusion4</span>
<span class="t" style="font-size:4.84px;color:#525252;padding-left:0.196px;transform:translate(103px,400.60px) rotate(0.05deg) scaleX(1.0200);">Extrusion5</span>
<span class="t" style="font-size:4.84px;color:#525252;padding-left:0.095px;transform:translate(111px,408.69px) rotate(0.05deg) scaleX(1.0500);">AlongDistance</span>
<span class="t" style="font-size:4.84px;color:#525252;padding-left:0.192px;transform:translate(160px,408.69px) rotate(0.05deg) scaleX(1.0400);">d44</span>
<span class="t" style="font-size:4.84px;color:#525252;transform:translate(206px,408.69px) rotate(0.05deg) scaleX(1.0400);">mm</span>
<span class="t" style="font-size:4.84px;color:#525252;padding-left:0.294px;transform:translate(233px,408.69px) rotate(0.05deg) scaleX(1.0200);">( width_separator * 2 ) - 4 mm</span>
<span class="t" style="font-size:4.84px;color:#525252;padding-left:0.400px;transform:translate(383px,408.69px) rotate(0.05deg) scaleX(1.0000);">16.40</span>
<span class="t" style="font-size:4.84px;color:#525252;padding-left:0.095px;transform:translate(111px,416.79px) rotate(0.05deg) scaleX(1.0500);">TaperAngle</span>
<span class="t" style="font-size:4.84px;color:#525252;padding-left:0.192px;transform:translate(160px,416.79px) rotate(0.05deg) scaleX(1.0400);">d45</span>
<span class="t" style="font-size:4.84px;color:#525252;transform:translate(206px,416.79px) rotate(0.05deg) scaleX(1.0400);">deg</span>
<span class="t" style="font-size:4.84px;color:#525252;padding-left:0.294px;transform:translate(233px,416.79px) rotate(0.05deg) scaleX(1.0200);">0.0 deg</span>
<span class="t" style="font-size:4.84px;color:#525252;padding-left:0.400px;transform:translate(383px,416.79px) rotate(0.05deg) scaleX(1.0000);">0.0</span>
<span class="t" style="font-size:4.84px;color:#525252;padding-left:0.196px;transform:translate(103px,424.88px) rotate(0.05deg) scaleX(1.0200);">Extrusion6</span>
<span class="t" style="font-size:4.84px;color:#525252;padding-left:0.095px;transform:translate(111px,432.98px) rotate(0.05deg) scaleX(1.0500);">AlongDistance</span>
<span class="t" style="font-size:4.84px;color:#525252;padding-left:0.192px;transform:translate(160px,432.98px) rotate(0.05deg) scaleX(1.0400);">d46</span>
<span class="t" style="font-size:4.84px;color:#525252;transform:translate(206px,432.98px) rotate(0.05deg) scaleX(1.0400);">mm</span>
<span class="t" style="font-size:4.84px;color:#525252;padding-left:0.294px;transform:translate(233px,432.98px) rotate(0.05deg) scaleX(1.0200);">( width_separator * 2 ) - 0.8 mm</span>
<span class="t" style="font-size:4.84px;color:#525252;padding-left:0.400px;transform:translate(383px,432.98px) rotate(0.05deg) scaleX(1.0000);">21.90</span>
<span class="t" style="font-size:4.84px;color:#525252;padding-left:0.095px;transform:translate(111px,441.07px) rotate(0.05deg) scaleX(1.0500);">TaperAngle</span>
<span class="t" style="font-size:4.84px;color:#525252;padding-left:0.192px;transform:translate(160px,441.07px) rotate(0.05deg) scaleX(1.0400);">d47</span>
<span class="t" style="font-size:4.84px;color:#525252;transform:translate(206px,441.07px) rotate(0.05deg) scaleX(1.0400);">deg</span>
<span class="t" style="font-size:4.84px;color:#525252;padding-left:0.294px;transform:translate(233px,441.07px) rotate(0.05deg) scaleX(1.0200);">0.0 deg</span>
<span class="t" style="font-size:4.84px;color:#525252;padding-left:0.400px;transform:translate(383px,441.07px) rotate(0.05deg) scaleX(1.0000);">0.0</span>
</div>
<svg class="l" width="628" height="472" viewBox="0 0 628 472">
<rect x="157.20" y="92.90" width="104.90" height="32.10" fill="none" stroke="#e41522" stroke-width="1.3" rx="0.7"/>
<rect x="154.40" y="409.40" width="158.90" height="31.80" fill="none" stroke="#e41522" stroke-width="1.3" rx="0.7"/>
<rect x="508.00" y="36.90" width="6.60" height="407.70" fill="#f0f0f0"/>
<rect x="508.00" y="43.50" width="6.35" height="386.10" fill="#cdcdcd"/>
<svg x="509.60" y="38.90" width="3.4" height="2.2" viewBox="0 0 10 6"><path d="M1 5 L5 1 L9 5" fill="none" stroke="#484848" stroke-width="1.9"/></svg>
<svg x="509.60" y="440.00" width="3.4" height="2.2" viewBox="0 0 10 6"><path d="M1 1 L5 5 L9 1" fill="none" stroke="#484848" stroke-width="1.9"/></svg>
<rect x="70.30" y="444.60" width="444.30" height="5.30" fill="#f0f0f0"/>
<rect x="77.20" y="444.60" width="410.60" height="5.30" fill="#cdcdcd"/>
<svg x="72.40" y="445.60" width="2.2" height="3.4" viewBox="0 0 6 10"><path d="M5 1 L1 5 L5 9" fill="none" stroke="#484848" stroke-width="1.9"/></svg>
<svg x="503.00" y="445.60" width="2.2" height="3.4" viewBox="0 0 6 10"><path d="M1 1 L5 5 L1 9" fill="none" stroke="#484848" stroke-width="1.9"/></svg>
<rect x="481.50" y="458.40" width="33.10" height="8.70" fill="#e1e1e1" stroke="#adadad" stroke-width="0.7"/>
</svg>
<div class="c" style="height:472px">
<span class="t" style="font-size:4.5px;color:#2a2a2a;padding-left:0.975px;transform:translate(494px,458.94px) rotate(0.05deg) scaleX(0.9228);">OK</span>
</div>
</body></html>
